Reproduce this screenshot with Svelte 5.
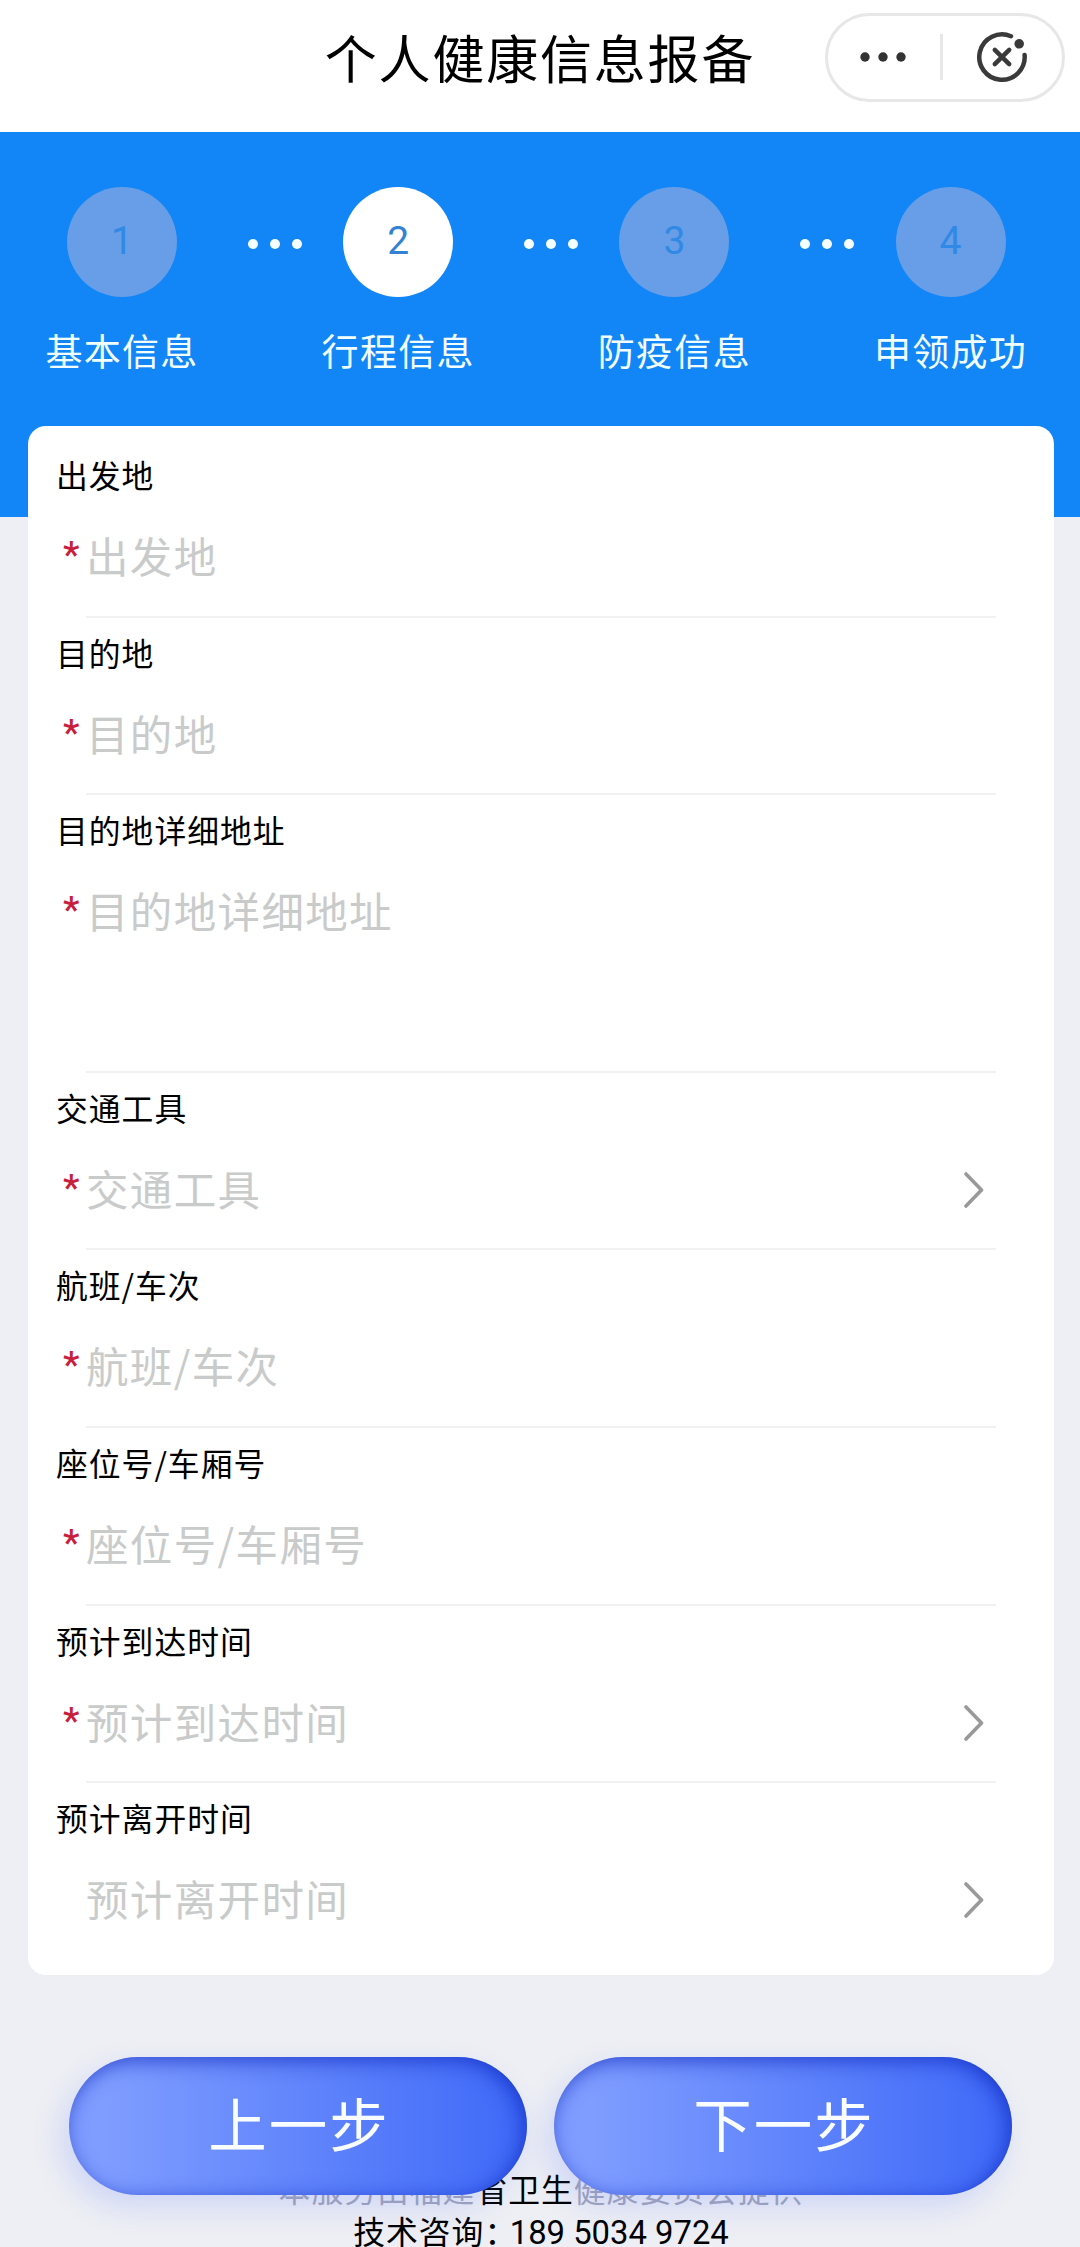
<script lang="ts">
  type step = {
    id: number;
    name: string;
  };

  type field = {
    name: string;
    required: boolean;
    select?: boolean;
    multiline?: boolean;
  };

  const steps: step[] = [
    { id: 1, name: "基本信息" },
    { id: 2, name: "行程信息" },
    { id: 3, name: "防疫信息" },
    { id: 4, name: "申领成功" },
  ];

  const fields: field[] = [
    { name: "出发地", required: true },
    { name: "目的地", required: true },
    { name: "目的地详细地址", required: true, multiline: true },
    { name: "交通工具", required: true, select: true },
    { name: "航班/车次", required: true },
    { name: "座位号/车厢号", required: true },
    { name: "预计到达时间", required: true, select: true },
    { name: "预计离开时间", required: false, select: true },
  ];

  let current = 2;

  const goTo = (id: number) => {
    current = Math.min(Math.max(id, 1), steps.length);
  };
</script>

<div class="page">
  <header class="header">
    <span></span>
    <h1 class="title">个人健康信息报备</h1>
    <div class="capsule">
      <svg class="more" viewBox="0 0 48 12">
        <circle cx="6" cy="6" r="4.7" />
        <circle cx="24" cy="6" r="4.7" />
        <circle cx="42" cy="6" r="4.7" />
      </svg>
      <span class="separator"></span>
      <svg class="close" viewBox="0 0 54 54">
        <path d="M36 6.2A22.7 22.7 0 1 0 49.6 25" />
        <path d="M19.8 19.8L34.2 34.2M34.2 19.8L19.8 34.2" />
        <circle cx="44.2" cy="13.8" r="4.8" />
      </svg>
    </div>
  </header>

  <nav class="steps">
    {#each steps as step}
      {#if step.id > 1}
        <div class="dots"><i></i><i></i><i></i></div>
      {/if}
      <div class="step" class:active={step.id === current}>
        <span class="number">{step.id}</span>
        <span class="name">{step.name}</span>
      </div>
    {/each}
  </nav>

  <main class="card">
    {#each fields as field}
      <section class="field" class:multiline={field.multiline}>
        <div class="label">{field.name}</div>
        <div class="control">
          <span class="star">{field.required ? "*" : ""}</span>
          <span class="placeholder">{field.name}</span>
          {#if field.select}
            <svg class="arrow" viewBox="0 0 20 36">
              <path d="M2 2L17.5 18L2 34" />
            </svg>
          {/if}
        </div>
      </section>
    {/each}
  </main>

  <div class="actions">
    <button on:click={() => goTo(current - 1)}>上一步</button>
    <button on:click={() => goTo(current + 1)}>下一步</button>
  </div>

  <footer class="footer">
    <p><span class="faded">本服务由福建</span>省卫生<span class="faded">健康委员会提供</span></p>
    <p>技术咨询<span class="colon">：</span><span class="phone">189 5034 9724</span></p>
  </footer>
</div>

<style>
  :global(body) {
    margin: 0;
    background: #eeeff4;
  }
  .page {
    width: 1080px;
    height: 2247px;
    overflow: hidden;
    background: #eeeff4;
    color: #000;
    font-family: "Noto Sans CJK SC", sans-serif;
  }
  .header {
    display: grid;
    grid-template-columns: 1fr auto 1fr;
    align-items: center;
    height: 132px;
    padding: 0 15px 18px;
    box-sizing: border-box;
    background: #fff;
  }
  .title {
    margin: 0;
    font-size: 52px;
    font-weight: 400;
    line-height: 110px;
    letter-spacing: 1.8px;
  }
  .capsule {
    display: flex;
    align-items: center;
    justify-self: end;
    width: 240px;
    height: 89px;
    box-sizing: border-box;
    border: 3px solid #e7e7e7;
    border-radius: 45px;
  }
  .more {
    width: 48px;
    height: 12px;
    margin-left: 31px;
    fill: #333;
  }
  .separator {
    width: 3px;
    height: 46px;
    margin-left: 33px;
    background: #e7e7e7;
  }
  .close {
    width: 54px;
    height: 54px;
    margin-left: 32px;
    fill: none;
    stroke: #3a3a3a;
    stroke-width: 4.5;
    stroke-linecap: round;
  }
  .close circle {
    fill: #3a3a3a;
    stroke: none;
  }
  .steps {
    display: flex;
    align-items: flex-start;
    height: 385px;
    padding: 55px 0 0 42px;
    box-sizing: border-box;
    background: #1286f6;
  }
  .step {
    display: flex;
    flex-direction: column;
    align-items: center;
    width: 160px;
  }
  .number {
    width: 110px;
    height: 110px;
    border-radius: 50%;
    background: #679ee7;
    color: #2f89e5;
    font-family: Roboto, sans-serif;
    font-size: 39px;
    line-height: 109px;
    text-align: center;
  }
  .active .number {
    background: #fff;
    color: #3482d3;
  }
  .name {
    margin-top: 22px;
    color: #f2ffff;
    font-size: 37px;
    line-height: 62px;
    letter-spacing: 1.3px;
    white-space: nowrap;
  }
  .dots {
    display: flex;
    gap: 12px;
    width: 70.2px;
    padding: 52px 0 0 46px;
  }
  .dots i {
    width: 10px;
    height: 10px;
    border-radius: 50%;
    background: #f6ffff;
  }
  .card {
    position: relative;
    height: 1549px;
    margin: -91px 26px 0 28px;
    padding-top: 14px;
    box-sizing: border-box;
    border-radius: 18px;
    background: #fff;
  }
  .field {
    display: flex;
    flex-direction: column;
    height: 177.7px;
    padding-left: 28px;
  }
  .multiline {
    height: 277.2px;
  }
  .label {
    font-size: 31.8px;
    line-height: 68px;
    height: 72px;
    letter-spacing: 1px;
  }
  .control {
    display: flex;
    flex: 1;
    margin: 0 58px 0 30px;
    border-bottom: 2px solid #f1f1f1;
    line-height: 86px;
  }
  .field:last-child .control {
    border: none;
  }
  .star {
    width: 23px;
    margin-left: -23px;
    color: #c8203c;
    font-family: Roboto, sans-serif;
    font-size: 37px;
    font-weight: 500;
    line-height: 86px;
  }
  .placeholder {
    flex: 1;
    color: #c9cbcb;
    font-size: 42.5px;
    letter-spacing: 1.35px;
  }
  .arrow {
    width: 20px;
    height: 36px;
    margin: 27px 12px 0 0;
    fill: none;
    stroke: #999;
    stroke-width: 3.6;
    stroke-linecap: round;
    stroke-linejoin: round;
  }
  .actions {
    position: relative;
    z-index: 1;
    display: flex;
    gap: 27px;
    margin-top: 82px;
    padding: 0 68px 0 69px;
  }
  button {
    flex: 1;
    height: 138px;
    padding: 0 0 10px 2px;
    border: none;
    border-radius: 69px;
    background: linear-gradient(90deg, #7f9dff 8%, #416bf8 96%);
    box-shadow:
      -8px 12px 30px rgba(80, 115, 255, 0.2),
      inset -4px 4px 20px rgba(13, 38, 190, 0.7);
    color: #fafdff;
    font-family: inherit;
    font-size: 58.5px;
    letter-spacing: 2px;
  }
  .footer {
    margin-top: -28px;
    padding-left: 2px;
    font-size: 31.8px;
    line-height: 42px;
    letter-spacing: 1px;
    text-align: center;
    white-space: nowrap;
  }
  .footer p {
    margin: 0;
  }
  .faded {
    color: #a3a5b8;
  }
  .colon {
    letter-spacing: -6.5px;
  }
  .phone {
    font-family: Roboto, sans-serif;
    font-size: 32.8px;
    letter-spacing: 0;
  }
</style>
